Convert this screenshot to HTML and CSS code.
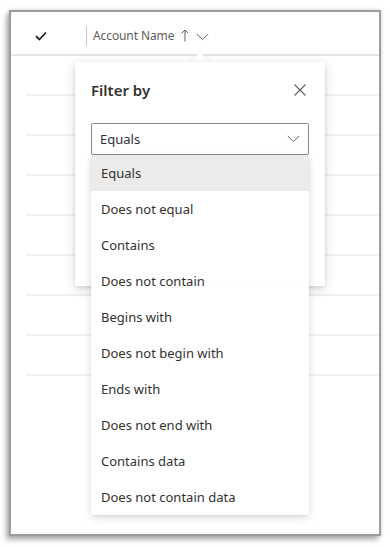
FILE: index.html
```html
<!DOCTYPE html>
<html>
<head>
<meta charset="utf-8">
<link rel="stylesheet" href="styles.css">
</head>
<body>
<div class="frame">
  <div class="header">
    <div class="check-cell">
      <svg width="12" height="10" viewBox="0 0 12 10"><path d="M1 5.2 L4.3 8.5 L11 1.5" fill="none" stroke="#201f1e" stroke-width="1.8"/></svg>
    </div>
    <div class="col-head">
      <span class="col-title">Account Name</span>
      <svg class="arrow-up" width="8" height="13" viewBox="0 0 8 13"><path d="M4 1 V12.5 M0.8 4.2 L4 1 L7.2 4.2" fill="none" stroke="#605e5c" stroke-width="1"/></svg>
      <svg class="chev" width="13" height="8" viewBox="0 0 13 8"><path d="M0.8 1 L6.5 6.7 L12.2 1" fill="none" stroke="#605e5c" stroke-width="1"/></svg>
    </div>
  </div>
  <div class="rows">
    <div class="row"></div>
    <div class="row"></div>
    <div class="row"></div>
    <div class="row"></div>
    <div class="row"></div>
    <div class="row"></div>
    <div class="row"></div>
    <div class="row"></div>
  </div>

  <div class="callout">
    <div class="beak"></div>
    <div class="callout-body">
      <div class="callout-head">
        <span class="title">Filter by</span>
        <svg class="close" width="12" height="12" viewBox="0 0 12 12"><path d="M0.5 0.5 L11.5 11.5 M11.5 0.5 L0.5 11.5" fill="none" stroke="#605e5c" stroke-width="1.1"/></svg>
      </div>
      <div class="select">
        <span>Equals</span>
        <svg width="13" height="8" viewBox="0 0 13 8"><path d="M0.8 1 L6.5 6.7 L12.2 1" fill="none" stroke="#605e5c" stroke-width="1"/></svg>
      </div>
      <div class="buttons">
        <div class="btn"></div>
        <div class="btn"></div>
      </div>
    </div>
  </div>

  <ul class="options">
    <li class="option selected">Equals</li>
    <li class="option">Does not equal</li>
    <li class="option">Contains</li>
    <li class="option">Does not contain</li>
    <li class="option">Begins with</li>
    <li class="option">Does not begin with</li>
    <li class="option">Ends with</li>
    <li class="option">Does not end with</li>
    <li class="option">Contains data</li>
    <li class="option">Does not contain data</li>
  </ul>
</div>
</body>
</html>
```

FILE: styles.css
```css
* { box-sizing: border-box; }
html, body { margin: 0; padding: 0; background: #ffffff; }
body {
  font-family: "Noto Sans", "Open Sans", sans-serif;
  color: #323130;
  width: 390px;
  height: 547px;
  overflow: hidden;
}
.frame {
  position: relative;
  margin: 10px 0 0 9px;
  width: 372px;
  height: 526px;
  border: 2px solid #9d9d9d;
  background: #ffffff;
  box-shadow: -3px 4px 5px rgba(0,0,0,0.28), 0 0 4px rgba(0,0,0,0.18);
}
.header {
  display: flex;
  align-items: center;
  height: 44px;
  padding-top: 5px;
  border-bottom: 2px solid #e6e5e4;
}
.check-cell {
  width: 75px;
  display: flex;
  justify-content: center;
  padding-right: 15px;
}
.check-cell svg { display: block; }
.col-head {
  display: flex;
  align-items: center;
  border-left: 1px solid #c8c6c4;
  height: 20px;
  padding-left: 6px;
}
.col-title {
  font-size: 12px;
  color: #605e5c;
  letter-spacing: -0.1px;
}
.arrow-up { margin-left: 7px; display: block; }
.chev { margin-left: 7px; display: block; margin-top: 2px; }
.rows { padding-left: 15px; }
.row {
  height: 40px;
  border-bottom: 2px solid #f1f0ef;
}
.callout {
  position: absolute;
  left: 64px;
  top: 50px;
  width: 250px;
  height: 224px;
}
.beak {
  position: absolute;
  left: 117px;
  top: -7px;
  width: 16px;
  height: 16px;
  background: #ffffff;
  transform: rotate(45deg);
  box-shadow: -1px -1px 3px rgba(0,0,0,0.06);
}
.callout-body {
  position: relative;
  height: 100%;
  background: #ffffff;
  box-shadow: 0 3px 10px rgba(0,0,0,0.16), 0 1px 3px rgba(0,0,0,0.08);
  padding: 16px 16px 0 16px;
}
.callout-head {
  display: flex;
  justify-content: space-between;
  align-items: center;
  height: 24px;
}
.title {
  font-size: 15px;
  font-weight: 600;
  color: #323130;
}
.close { margin-right: 3px; display: block; }
.select {
  margin-top: 21px;
  height: 32px;
  border: 1px solid #8a8886;
  border-radius: 2px;
  display: flex;
  align-items: center;
  justify-content: space-between;
  padding: 0 8px 0 8px;
  font-size: 13px;
}
.select svg { display: block; }
.buttons {
  display: flex;
  justify-content: flex-end;
  gap: 10px;
  margin-top: 84px;
}
.btn { width: 80px; height: 30px; background: #f6f6f6; }
.options {
  position: absolute;
  left: 80px;
  top: 143px;
  width: 218px;
  margin: 0;
  padding: 0;
  list-style: none;
  background: rgba(255,255,255,0.97);
  box-shadow: 0 3px 8px rgba(0,0,0,0.14), 0 1px 2px rgba(0,0,0,0.08);
  border-radius: 2px;
}
.option {
  height: 36px;
  display: flex;
  align-items: center;
  padding-left: 10px;
  font-size: 13px;
  color: #323130;
}
.option.selected { background: #edebe9; }
```
